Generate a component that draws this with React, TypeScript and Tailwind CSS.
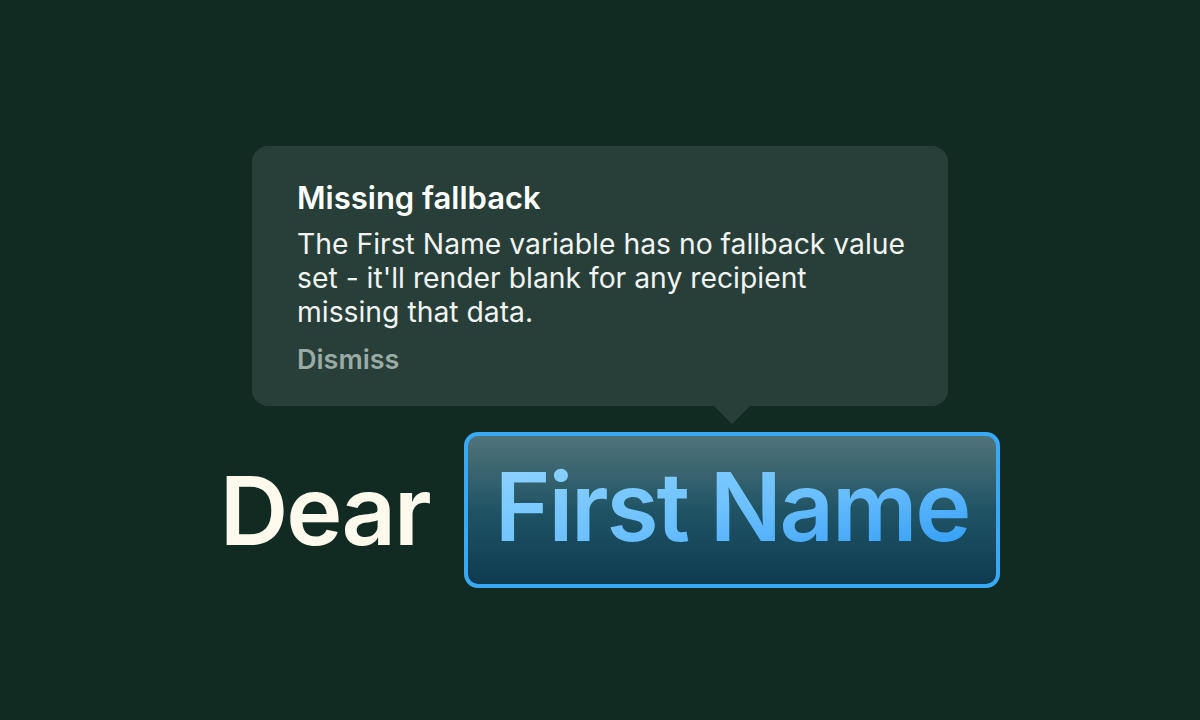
export default function App() {
  return (
    <div
      className="w-[1200px] h-[720px] bg-[#112a22] flex flex-col items-center pt-[146px]"
      style={{ fontFamily: 'Inter, "Noto Sans", sans-serif' }}
    >
      <div className="w-[696px] h-[260px] rounded-2xl bg-[#273f38] pl-[45px] pr-8 pt-[32px]">
        <h2 className="text-[31px] leading-[40px] font-semibold text-white">Missing fallback</h2>
        <p className="text-[28.3px] leading-[34px] text-[#f1f4f2] mt-[9px] w-[616px]">
          The First Name variable has no fallback value set - it'll render blank for any recipient missing that data.
        </p>
        <button className="mt-[14px] text-[27px] leading-[34px] font-semibold text-[#9aaba5]">Dismiss</button>
      </div>

      <div className="flex items-center gap-[34px] mt-[26px] ml-[20px]">
        <span className="text-[95px] leading-none font-semibold text-[#fdf9ec] tracking-[-2px]">Dear</span>
        <div className="relative">
          <div className="absolute -top-[26px] left-1/2 -translate-x-1/2 w-0 h-0 border-l-[18px] border-r-[18px] border-t-[18px] border-l-transparent border-r-transparent border-t-[#273f38]" />
          <div className="h-[156px] rounded-[14px] border-4 border-[#3aa9f5] bg-gradient-to-b from-[#4f7479] via-[#1f5465] to-[#0f3b51] px-[27px] flex items-center">
            <span className="text-[95px] leading-none font-semibold tracking-[-2.2px] bg-gradient-to-br from-[#8fd4ff] via-[#6cc0ff] to-[#1f98f2] bg-clip-text text-transparent pb-2">
              First Name
            </span>
          </div>
        </div>
      </div>
    </div>
  );
}
